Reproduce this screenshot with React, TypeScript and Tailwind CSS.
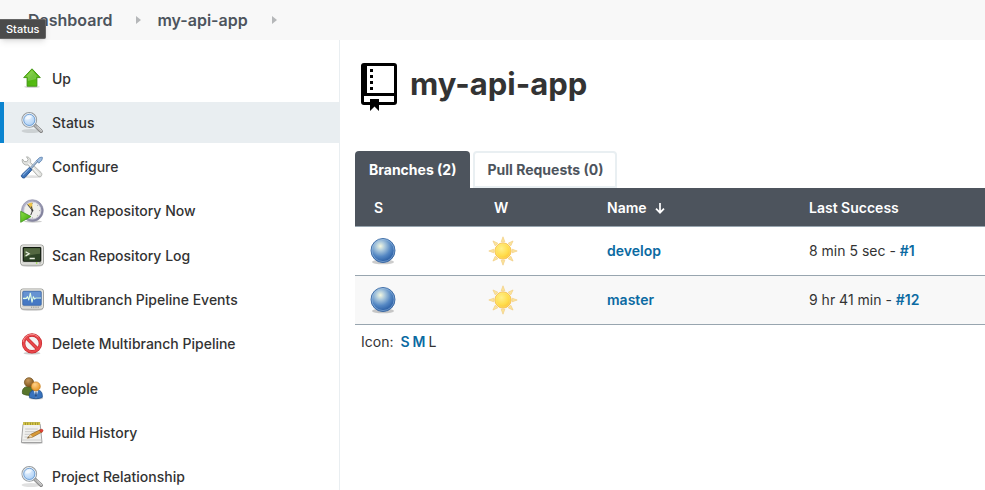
import React from "react";

function UpIcon() {
  return (
    <svg width="24" height="24" viewBox="0 0 24 24" aria-hidden="true">
      <defs>
        <linearGradient id="up-fill" x1="0" y1="0" x2="1" y2="1">
          <stop offset="0" stopColor="#8fdc3c" />
          <stop offset="0.5" stopColor="#4fb50f" />
          <stop offset="1" stopColor="#5cc414" />
        </linearGradient>
      </defs>
      <ellipse cx="12" cy="19.8" rx="8" ry="1.3" fill="#000" opacity="0.16" />
      <path d="M12 1.8 20.3 10.600H16.900V19.200H7.100V10.600H3.700Z" fill="url(#up-fill)" stroke="#3c9010" strokeWidth="0.9" strokeLinejoin="round" />
      <path d="M12 3.300 17.900 9.700H16V12L8 14V9.700H6.100Z" fill="#fff" opacity="0.2" />
    </svg>
  );
}

function SearchIcon() {
  return (
    <svg width="24" height="24" viewBox="0 0 24 24" aria-hidden="true">
      <defs>
        <radialGradient id="lens" cx="0.4" cy="0.35" r="0.75">
          <stop offset="0" stopColor="#e8f3ff" />
          <stop offset="0.6" stopColor="#b9d7f7" />
          <stop offset="1" stopColor="#8fbcec" />
        </radialGradient>
      </defs>
      <ellipse cx="11" cy="20" rx="9.5" ry="2" fill="#000" opacity="0.12" />
      <path d="m14.8 14.2 6.300 6" stroke="#777" strokeWidth="3.6" strokeLinecap="round" />
      <path d="m15.2 14.6 5.900 5.600" stroke="#b5b5b5" strokeWidth="2.3" strokeLinecap="round" />
      <path d="m17.2 15.5 4.500 4.300" stroke="#e4e4e4" strokeWidth="0.8" />
      <circle cx="9.3" cy="8.9" r="7.3" fill="url(#lens)" stroke="#9a9ea1" strokeWidth="1.1" />
      <circle cx="9.3" cy="8.9" r="6.4" fill="none" stroke="#f2f2f2" strokeWidth="1" />
      <circle cx="9.3" cy="8.9" r="5.6" fill="none" stroke="#5f94ce" strokeWidth="0.8" />
      <path d="M5 8.3a4.500 4.500 0 0 1 7-3.100c-1.200 2.800-3.400 3.800-7 3.100Z" fill="#fff" opacity="0.6" />
    </svg>
  );
}

function ConfigureIcon() {
  return (
    <svg width="24" height="24" viewBox="0 0 24 24" aria-hidden="true">
      <ellipse cx="12" cy="21.7" rx="10" ry="1.4" fill="#000" opacity="0.12" />
      <path
        d="M6.5 1.8 8.1 4.6 6.8 6.6 4.2 6.5 2.4 4c-.8 2.3.4 5.3 3.2 6 .8.2 1.6.1 2.3-.1l9.5 10.7c1.1 1.3 2.7 1.4 3.7.5 1-.9 1-2.5 0-3.5L10.5 7.5C11.3 4.4 9.5 1.9 6.5 1.8Z"
        fill="#e1e2df"
        stroke="#a5a7a3"
        strokeWidth="0.8"
      />
      <path d="m8.5 8.3 10.7 11.5" stroke="#fff" strokeWidth="1" />
      <path d="m10.5 13.6 7.3-8" stroke="#718ba8" strokeWidth="2.2" />
      <path d="m10.4 13.3 7-7.7" stroke="#cbdcf0" strokeWidth="0.9" />
      <path d="m16.6 5.5 2.9-2.9 2.6-.5.4.5-.7 2.7-3 2.9Z" fill="#9dbce0" stroke="#5e83ae" strokeWidth="0.8" />
      <path d="M2 19.5 9.4 12.4l2.5 2.4-6.8 7.6c-.8.8-2 .8-3 0-1-.9-1-2-.1-2.9Z" fill="#3d73b8" stroke="#204f8f" strokeWidth="0.9" />
      <path d="m3.2 19.8 6-5.9" stroke="#83aee0" strokeWidth="1.1" strokeLinecap="round" />
    </svg>
  );
}

function ScanNowIcon() {
  return (
    <svg width="24" height="24" viewBox="0 0 24 24" aria-hidden="true">
      <defs>
        <linearGradient id="clock-rim" x1="0" y1="0" x2="1" y2="1">
          <stop offset="0" stopColor="#c0c0d4" />
          <stop offset="1" stopColor="#73738f" />
        </linearGradient>
        <linearGradient id="play-fill" x1="0" y1="0" x2="1" y2="1">
          <stop offset="0" stopColor="#8be046" />
          <stop offset="1" stopColor="#37a006" />
        </linearGradient>
      </defs>
      <ellipse cx="13" cy="22.5" rx="9" ry="1.2" fill="#000" opacity="0.2" />
      <circle cx="12.4" cy="11.6" r="10.9" fill="url(#clock-rim)" stroke="#8585a0" strokeWidth="0.6" />
      <circle cx="12.4" cy="11.6" r="8.500" fill="#efefeb" stroke="#d5d5e2" strokeWidth="0.8" />
      <path d="M12.4 11.6 7.4 5.2a8.2 8.2 0 0 1 5-1.8Z" fill="#efc448" />
      <path d="m7.5 5.5 5 6.1L10.8 16M12.500 11.600l-1.200-4.200" stroke="#444" strokeWidth="1" fill="none" />
      <circle cx="12.4" cy="11.6" r="1" fill="#333" />
      <path d="M12.4 3.800v1M20.200 11.600h-1M12.400 19.400v-1M18 6l-.7.7M18 17.200l-.7-.7" stroke="#888" strokeWidth="0.8" />
      <path d="M.7 12.3 11 17.500.7 23.300Z" fill="url(#play-fill)" stroke="#3b9414" strokeWidth="0.8" strokeLinejoin="round" />
    </svg>
  );
}

function ScreenFrame({ children }: { children: React.ReactNode }) {
  return (
    <svg width="24" height="24" viewBox="0 0 24 24" aria-hidden="true">
      <ellipse cx="12" cy="21.5" rx="11" ry="1.3" fill="#000" opacity="0.2" />
      <rect x="0.6" y="1" width="22.8" height="20" rx="2.2" fill="#d0d1cc" stroke="#9a9b96" strokeWidth="1" />
      <rect x="1.5" y="1.9" width="21" height="18.2" rx="1.5" fill="none" stroke="#f1f1ef" strokeWidth="0.8" />
      {children}
    </svg>
  );
}

function TerminalIcon() {
  return (
    <ScreenFrame>
      <rect x="3.3" y="3.5" width="17.4" height="13.8" rx="0.8" fill="#2d4426" stroke="#10180e" strokeWidth="1.1" />
      <path d="M4 4.200h16v5.500c-5 .2-10 1.200-16 3.800Z" fill="#8ca06c" opacity="0.4" />
      <path d="m5.600 7.700 3.500 2.100-3.500 2.100M9.600 14.500h5.200" stroke="#e9f1e1" strokeWidth="1.3" fill="none" />
      <circle cx="16.7" cy="19" r="0.8" fill="#8edb2d" />
      <path d="M19 19h2" stroke="#969692" strokeWidth="0.7" />
    </ScreenFrame>
  );
}

function EventsIcon() {
  return (
    <ScreenFrame>
      <rect x="2.8" y="3.3" width="18.4" height="14" rx="1" fill="#4579c4" stroke="#3a68ab" strokeWidth="0.8" />
      <path d="M3.300 3.800h17.400v5c-5.400.2-11 1-17.400 3.500Z" fill="#a4c5ee" opacity="0.35" />
      <path d="M3 10.400h3.300l1.200-1.800 1.300 3.400 1.500-6.800 1.700 9 1.400-5.500 1.200 2.400 1-1.100H21" stroke="#e2ffe5" strokeWidth="1.1" fill="none" strokeLinejoin="round" />
      <path d="M11 19.200h8.500" stroke="#8d8e8a" strokeWidth="1" strokeDasharray="1.2 1" />
    </ScreenFrame>
  );
}

function DeleteIcon() {
  return (
    <svg width="24" height="24" viewBox="0 0 24 24" aria-hidden="true">
      <ellipse cx="12" cy="21.2" rx="8.500" ry="1.4" fill="#000" opacity="0.2" />
      <circle cx="12" cy="11.4" r="8.4" fill="#f5f3f3" stroke="#c4262b" strokeWidth="3.400" />
      <path d="m6.200 5.600 11.600 11.600" stroke="#c4262b" strokeWidth="3.400" />
      <circle cx="12" cy="11.4" r="8.4" fill="none" stroke="#e8474b" strokeWidth="2.200" />
      <path d="m6.200 5.600 11.600 11.600" stroke="#e8474b" strokeWidth="2.200" />
      <path d="M3.200 9.800A9 9 0 0 1 18.500 5" fill="none" stroke="#f58e8e" strokeWidth="1" />
    </svg>
  );
}

function PeopleIcon() {
  return (
    <svg width="24" height="24" viewBox="0 0 24 24" aria-hidden="true">
      <defs>
        <radialGradient id="head-back" cx="0.4" cy="0.3" r="0.7">
          <stop offset="0" stopColor="#c6995e" />
          <stop offset="1" stopColor="#80551c" />
        </radialGradient>
        <radialGradient id="head-front" cx="0.4" cy="0.3" r="0.7">
          <stop offset="0" stopColor="#ffd18a" />
          <stop offset="1" stopColor="#e89624" />
        </radialGradient>
      </defs>
      <path d="M2.5 16.7c-.7-4 1.2-7 5.2-7h4.6c3 0 4.3 3 4.2 7-3.8 2.2-9.8 2.3-14 0Z" fill="#58752b" stroke="#3f581d" strokeWidth="0.8" />
      <circle cx="9" cy="5.3" r="4.6" fill="url(#head-back)" stroke="#71501f" strokeWidth="0.7" />
      <ellipse cx="16" cy="21.4" rx="7" ry="1.2" fill="#000" opacity="0.2" />
      <path d="M9.4 20.4c-.4-4.6 1.5-7.1 4.7-7.1H18c3.3 0 4.6 3 4.3 7.1-3.7 1.8-9 1.8-12.9 0Z" fill="#3872bc" stroke="#204f8c" strokeWidth="0.8" />
      <path d="m13.7 13.4 2.3 7.7 2.2-7.7Z" fill="#e7effa" />
      <path d="m15.6 14.5-.7 4.6 1.1 1.5 1-1.5-.6-4.6Z" fill="#244d87" />
      <circle cx="15.8" cy="9.4" r="4.5" fill="url(#head-front)" stroke="#c77c1c" strokeWidth="0.7" />
    </svg>
  );
}

function HistoryIcon() {
  return (
    <svg width="24" height="24" viewBox="0 0 24 24" aria-hidden="true">
      <ellipse cx="12" cy="22" rx="11" ry="1.3" fill="#000" opacity="0.18" />
      <path d="M3 3.400h17.200L22 21.500H1.400Z" fill="#f1f1ef" stroke="#999" strokeWidth="0.9" />
      <path d="M1.700 19h20" stroke="#c7c7c5" strokeWidth="0.8" />
      <path d="M5.200 8h12.600M5 10.700h12.800M4.700 13.300h9M4.500 16h4" stroke="#c4c4c2" strokeWidth="0.9" />
      <path d="M3.200 2.600h16.900" stroke="#8d8423" strokeWidth="2.800" />
      <path d="M3.200 2.600h16.900" stroke="#d9c84a" strokeWidth="2.800" strokeDasharray="1.7 0.8" />
      <path d="m7.400 17.200 3.100-3.700 9.600-4.700 2.200 2-9.700 5.300Z" fill="#d99a36" stroke="#8d6222" strokeWidth="0.7" />
      <path d="m7.400 17.200 3.100-3.700 2.100 2.600Z" fill="#e8cfa4" />
      <path d="m7.400 17.200 1.500-1.700.8.8Z" fill="#333" />
      <path d="m19.400 9.200 1.800-.9c1.500-.3 2.400 1.100 1.400 2.200l-1.300.9Z" fill="#e54335" stroke="#b62b22" strokeWidth="0.6" />
    </svg>
  );
}

function SuccessBall() {
  return (
    <svg width="32" height="32" viewBox="0 0 32 32" role="img" aria-label="Success" className="block">
      <defs>
        <radialGradient id="ball-fill" cx="0.39" cy="0.32" r="0.7">
          <stop offset="0" stopColor="#f4f8e0" />
          <stop offset="0.28" stopColor="#a9c7dc" />
          <stop offset="0.62" stopColor="#5588c4" />
          <stop offset="1" stopColor="#2458a0" />
        </radialGradient>
      </defs>
      <ellipse cx="16" cy="27" rx="11" ry="2.300" fill="#000" opacity="0.2" />
      <circle cx="16" cy="15.500" r="12" fill="url(#ball-fill)" stroke="#3665a2" strokeWidth="0.9" />
      <circle cx="16" cy="15.500" r="11.100" fill="none" stroke="#a5c5e6" strokeWidth="0.8" opacity="0.65" />
    </svg>
  );
}

const RAYS = [0, 45, 90, 135, 180, 225, 270, 315];

function SunIcon() {
  return (
    <svg width="32" height="32" viewBox="0 0 32 32" role="img" aria-label="Health 100%" className="block">
      <defs>
        <radialGradient id="sun-fill" cx="0.4" cy="0.35" r="0.75">
          <stop offset="0" stopColor="#fff08b" />
          <stop offset="0.6" stopColor="#ffdc4b" />
          <stop offset="1" stopColor="#f8b82e" />
        </radialGradient>
      </defs>
      {RAYS.map((a) => (
        <path key={a} d="m16 1.800 1.800 5h-3.600Z" transform={`rotate(${a} 16 16)`} fill="#fbe59b" stroke="#f2cd83" strokeWidth="0.7" />
      ))}
      <circle cx="16" cy="16" r="8.100" fill="url(#sun-fill)" stroke="#f6bd4c" strokeWidth="0.9" />
      <circle cx="16" cy="16" r="7.200" fill="none" stroke="#fff3a0" strokeWidth="0.7" opacity="0.4" />
    </svg>
  );
}

function RepoIcon() {
  return (
    <svg width="48" height="48" viewBox="0 0 48 48" aria-hidden="true">
      <path
        fillRule="evenodd"
        d="M9 0h30a3 3 0 0 1 3 3v36a3 3 0 0 1-3 3H24v6l-4.500-4.500L15 48v-6H9a3 3 0 0 1-3-3V3a3 3 0 0 1 3-3Zm3 3v27h27V3Zm-3 30v6h6v-3h9v3h15v-6Z"
      />
      <path d="M15 6h3v3h-3ZM15 12h3v3h-3ZM15 18h3v3h-3ZM15 24h3v3h-3Z" />
    </svg>
  );
}

const TASKS = [
  { label: "Up", Icon: UpIcon },
  { label: "Status", Icon: SearchIcon, active: true },
  { label: "Configure", Icon: ConfigureIcon },
  { label: "Scan Repository Now", Icon: ScanNowIcon },
  { label: "Scan Repository Log", Icon: TerminalIcon },
  { label: "Multibranch Pipeline Events", Icon: EventsIcon },
  { label: "Delete Multibranch Pipeline", Icon: DeleteIcon },
  { label: "People", Icon: PeopleIcon },
  { label: "Build History", Icon: HistoryIcon },
  { label: "Project Relationship", Icon: SearchIcon },
];

const BRANCHES = [
  { name: "develop", ago: "8 min 5 sec", build: "#1" },
  { name: "master", ago: "9 hr 41 min", build: "#12" },
];

function Separator() {
  return (
    <span className="pr-4 pl-6">
      <svg width="5" height="8" viewBox="0 0 5 8" fill="#b5b7b9" aria-hidden="true">
        <path d="M0 0 5 4 0 8Z" />
      </svg>
    </span>
  );
}

export default function App() {
  return (
    <div className="flex h-screen flex-col overflow-hidden bg-white font-['Inter',sans-serif] text-sm text-[#333]">
      <header className="relative shrink-0 bg-[#f8f8f8]">
        <nav aria-label="Breadcrumb" className="flex h-10 items-center pl-7 text-base font-semibold text-[#4d545d]">
          <a href="#dashboard">Dashboard</a>
          <Separator />
          <a href="#my-api-app">my-api-app</a>
          <Separator />
        </nav>
        <div role="tooltip" className="absolute top-[19px] left-0 z-10 rounded-r-xs border border-l-0 border-[#666] bg-[#4b4b4b] px-1.5 text-[11px] leading-[18px] font-medium text-white shadow-md">
          Status
        </div>
      </header>
      <div className="flex min-h-0 flex-1">
        <aside className="w-[340px] shrink-0 border-r border-[#e9eef1] pt-[18px]">
          <ul className="flex min-h-[440px] flex-col justify-between">
            {TASKS.map(({ label, Icon, active }) => (
              <li key={label}>
                <a
                  href="#task"
                  aria-current={active ? "page" : undefined}
                  className={`flex h-[41px] items-center gap-2 border-l-4 pl-4 font-medium ${active ? "border-[#0b84d0] bg-[#e9eef1]" : "border-transparent"}`}
                >
                  <Icon />
                  {label}
                </a>
              </li>
            ))}
          </ul>
        </aside>
        <main className="min-w-0 flex-1 pl-[15px]">
          <h1 className="mt-[23px] mb-10 flex items-center gap-[7px] text-[31px] leading-[48px] font-bold">
            <RepoIcon />
            <span className="-mt-1.5">my-api-app</span>
          </h1>
          <div role="tablist" className="flex gap-[3px] font-bold">
            <button role="tab" aria-selected="true" className="h-[37px] rounded-t bg-[#4d545d] px-3.5 text-white">
              Branches (2)
            </button>
            <button role="tab" aria-selected="false" className="h-[37px] rounded-t border-2 border-[#e9eff2] px-3 text-[#4d545d]">
              Pull Requests (0)
            </button>
          </div>
          <table className="w-full table-fixed text-left">
            <colgroup>
              <col className="w-[120px]" />
              <col className="w-[120px]" />
              <col className="w-[202px]" />
              <col />
            </colgroup>
            <thead className="bg-[#4d545d] text-white">
              <tr className="h-[38px] border-b border-[#98a5af]">
                <th scope="col" className="px-[19px] pt-0.5 font-semibold">S</th>
                <th scope="col" className="px-[19px] pt-0.5 font-semibold">W</th>
                <th scope="col" className="px-3 pt-0.5 font-semibold">
                  <button className="flex items-center gap-2">
                    Name
                    <svg width="10" height="12" viewBox="0 0 10 12" fill="none" stroke="currentColor" strokeWidth="1.700" aria-label="sorted" role="img">
                      <path d="M5 1v9.500M1 6.700l4 4 4-4" />
                    </svg>
                  </button>
                </th>
                <th scope="col" className="px-3 pt-0.5 font-semibold">Last Success</th>
              </tr>
            </thead>
            <tbody>
              {BRANCHES.map(({ name, ago, build }) => (
                <tr key={name} className="h-[49px] border-b border-[#98a5af] even:bg-[#f8f8f8]">
                  <td className="px-3"><SuccessBall /></td>
                  <td className="px-3"><SunIcon /></td>
                  <td className="px-3">
                    <a href="#branch" className="font-semibold text-[#0b6aa2]">{name}</a>
                  </td>
                  <td className="px-3">
                    {ago} - <a href="#build" className="font-semibold text-[#0b6aa2]">{build}</a>
                  </td>
                </tr>
              ))}
            </tbody>
          </table>
          <div className="flex gap-[3px] px-1.5 pt-[7px]">
            <span className="pr-1">Icon:</span>
            <a href="#small" className="font-semibold text-[#0b6aa2]">S</a>
            <a href="#medium" className="font-semibold text-[#0b6aa2]">M</a>
            <span>L</span>
          </div>
        </main>
      </div>
    </div>
  );
}
